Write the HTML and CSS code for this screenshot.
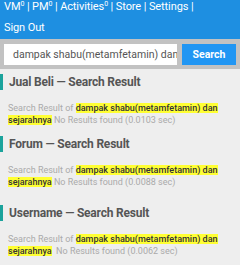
FILE: index.html
```html
<!DOCTYPE html>
<html>
<head>
<meta charset="utf-8">
<link rel="stylesheet" href="styles.css">
</head>
<body>
<div class="top">
  <div class="nav">
    <a>VM<sup>0</sup></a> | <a>PM<sup>0</sup></a> | <a>Activities<sup>0</sup></a> | <a>Store</a> | <a>Settings</a> |
  </div>
  <div class="nav second">
    <a>Sign Out</a>
  </div>
</div>
<div class="searchbar">
  <div class="input">dampak shabu(metamfetamin) dan sejarahnya</div>
  <div class="btn">Search</div>
</div>
<div class="section">
  <div class="title">Jual Beli — Search Result</div>
  <div class="desc">Search Result of <mark>dampak shabu(metamfetamin) dan sejarahnya</mark> No Results found (0.0103 sec)</div>
</div>
<div class="section">
  <div class="title">Forum — Search Result</div>
  <div class="desc">Search Result of <mark>dampak shabu(metamfetamin) dan sejarahnya</mark> No Results found (0.0088 sec)</div>
</div>
<div class="section last">
  <div class="title">Username — Search Result</div>
  <div class="desc">Search Result of <mark>dampak shabu(metamfetamin) dan sejarahnya</mark>&nbsp; No Results found (0.0062 sec)</div>
</div>
</body>
</html>
```
FILE: styles.css
```css
body {
  margin: 0;
  background: #eeeeee;
  font-family: Roboto, "Liberation Sans", sans-serif;
  width: 240px;
  height: 265px;
  overflow: hidden;
}
.top {
  background: #1e8fe1;
  color: #fff;
  padding: 0 4px;
  height: 39px;
}
.nav {
  font-size: 11px;
  line-height: 14px;
  letter-spacing: -0.1px;
  white-space: nowrap;
}
.nav.second {
  margin-top: 7px;
}
.nav sup {
  font-size: 7px;
  line-height: 0;
  vertical-align: 4px;
}
.searchbar {
  background: #c2c2c2;
  display: flex;
  gap: 5px;
  padding: 5px 4px 4px 4px;
}
.input {
  background: #fff;
  width: 164px;
  height: 21px;
  padding: 0 0 0 9px;
  font-size: 10.5px;
  line-height: 21px;
  color: #555;
  white-space: nowrap;
  overflow: hidden;
}
.btn {
  flex: 1;
  background: #2196f3;
  color: #fff;
  font-weight: bold;
  font-size: 10.5px;
  text-align: center;
  line-height: 21px;
}
.section {
  padding-top: 5px;
}
.section + .section {
  padding-top: 10px;
}
.section.last {
  padding-top: 17px;
}
.title {
  border-left: 3px solid #1ba39c;
  padding-left: 6px;
  font-size: 12px;
  letter-spacing: -0.2px;
  font-weight: bold;
  color: #555;
  line-height: 16px;
}
.desc {
  margin-top: 12px;
  padding: 0 8px;
  font-size: 9px;
  line-height: 12px;
  color: #aaa;
}
mark {
  background: #ffff33;
  color: #333;
  font-weight: 500;
}
```
